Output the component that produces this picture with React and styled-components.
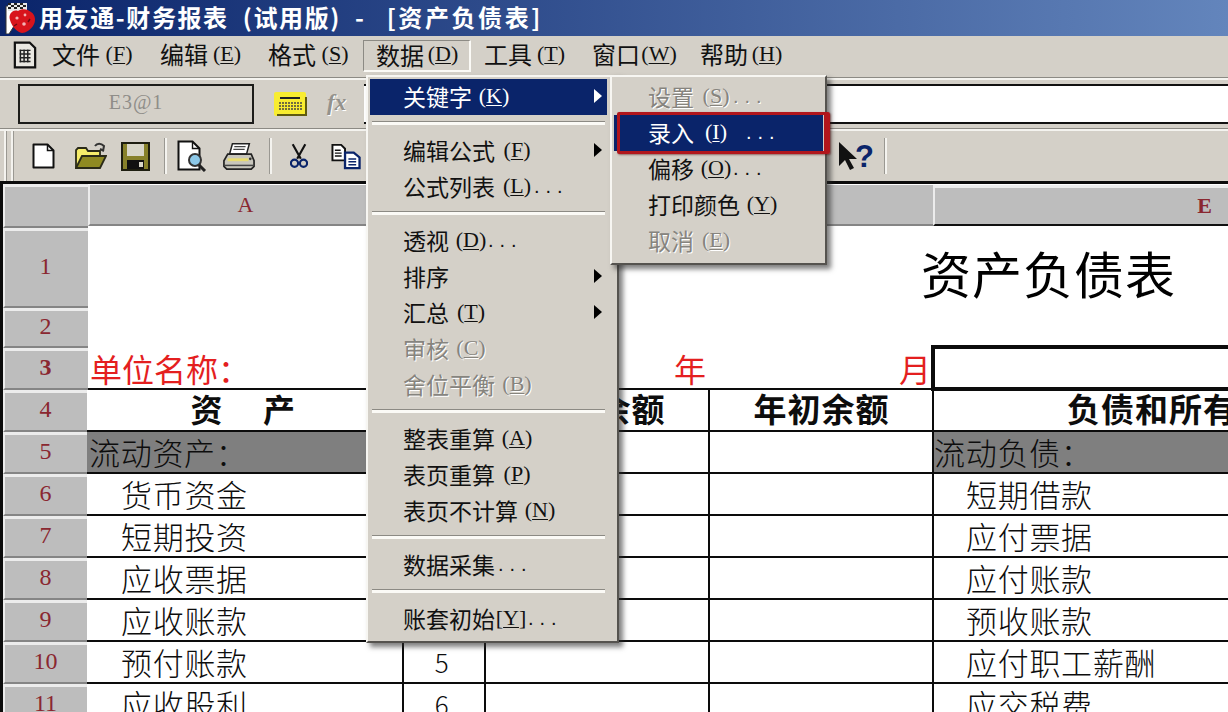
import React from "react";
import styled, { createGlobalStyle, css } from "styled-components";

const CJK = `"Noto Sans CJK SC", "Noto Sans", sans-serif`;
const SERIF = `"Liberation Serif", "Noto Sans CJK SC", serif`;

const GlobalStyle = createGlobalStyle`
  html, body {
    margin: 0;
    padding: 0;
    background: #d4d0c8;
  }
  * { box-sizing: border-box; }
`;

const Page = styled.div`
  width: 1228px;
  height: 712px;
  overflow: hidden;
  position: relative;
  font-family: ${CJK};
  background: #d4d0c8;
  color: #000;
`;

/* title bar */
const TitleBar = styled.div`
  height: 36px;
  display: flex;
  align-items: center;
  padding-left: 3px;
  gap: 3px;
  background: linear-gradient(90deg, #0a246a 0%, #6385bc 100%);
`;
const TitleText = styled.div`
  color: #fff;
  font-size: 24px;
  font-weight: 700;
  line-height: 32px;
  padding-bottom: 3px;
  letter-spacing: 1.6px;
  white-space: pre;
`;
const TitleDoc = styled.span`
  letter-spacing: 2.6px;
`;

/* menu bar */
const MenuBar = styled.div`
  height: 41px;
  display: flex;
  align-items: center;
  padding: 0 0 1px 13px;
`;
const MenuIcon = styled.div`
  width: 26px;
  height: 30px;
  display: flex;
`;
const MenuEntry = styled.div`
  width: 108px;
  height: 32px;
  padding: 0 0 5px 13px;
  display: flex;
  align-items: center;
  font-size: 24px;
  white-space: nowrap;
  color: #111;
  ${(p) =>
    p.$open &&
    css`
      border-top: 1px solid #8c8a84;
      border-left: 1px solid #8c8a84;
      border-bottom: 2px solid #fbfaf6;
      border-right: 2px solid #fbfaf6;
      padding: 0 0 3px 12px;
    `}
`;
const Hotkey = styled.span`
  font-family: ${SERIF};
  display: inline-flex;
  justify-content: center;
  width: 28px;
  margin-left: ${(p) => p.$gap ?? 5}px;
  font-size: 22px;
  u { text-underline-offset: 2px; text-decoration-thickness: 1px; }
`;

/* formula bar */
const BarRule = styled.div`
  height: 3px;
  background: #f4f3ef;
  border-top: 1px solid #8c8a84;
`;
const FormulaBar = styled.div`
  height: 48px;
  display: flex;
  align-items: center;
  padding-left: 18px;
`;
const NameBox = styled.div`
  width: 236px;
  height: 40px;
  padding-bottom: 3px;
  border: 2px solid #1c1c1a;
  display: flex;
  align-items: center;
  justify-content: center;
  font-family: ${SERIF};
  font-size: 20px;
  letter-spacing: 1px;
  color: #8f8d88;
`;
const KeyIcon = styled.div`
  width: 34px;
  height: 26px;
  margin-left: 19px;
  display: flex;
`;
const FxMark = styled.div`
  width: 24px;
  margin-left: 20px;
  padding-bottom: 2px;
  font-family: ${SERIF};
  font-style: italic;
  font-weight: 700;
  font-size: 23px;
  color: #94928c;
  text-shadow: 1px 1px 0 #fff;
`;
const FormulaInput = styled.div`
  flex: 1;
  height: 40px;
  margin-left: 13px;
  background: #fff;
  border-top: 2px solid #111;
  border-bottom: 2px solid #111;
`;

/* toolbar */
const ToolBar = styled.div`
  height: 50px;
  display: flex;
  align-items: center;
  position: relative;
  padding-left: 4px;
`;
const Grip = styled.div`
  width: 3px;
  height: 50px;
  margin-right: 4px;
  background: #f4f3ef;
  border-right: 1px solid #9a9892;
`;
const ToolIcon = styled.div`
  width: ${(p) => p.$w}px;
  height: 36px;
  margin-left: ${(p) => p.$ml}px;
  display: flex;
  align-items: center;
  flex: none;
`;
const ToolSep = styled.div`
  width: 3px;
  height: 36px;
  margin-left: ${(p) => p.$ml}px;
  background: #f4f3ef;
  border-left: 1px solid #9a9892;
  flex: none;
`;
const HelpMark = styled.span`
  font-family: "Liberation Sans", sans-serif;
  font-weight: 700;
  font-size: 31px;
  line-height: 31px;
  color: #0a246a;
  margin-left: -3px;
`;

/* sheet */
const Sheet = styled.div`
  display: grid;
  grid-template-columns: 85px 315px 82px 224px 224px 295px;
  grid-template-rows: 44px 80px 40px 42px repeat(8, 42px);
  border-top: 3px solid #0c0c0c;
  border-left: 3px solid #0c0c0c;
  background: #fff;
`;
const HeaderCell = styled.div`
  background: #bdbdbd;
  display: flex;
  align-items: center;
  justify-content: ${(p) => p.$align ?? "center"};
  padding-right: ${(p) => p.$pr ?? 2}px;
  padding-bottom: 5px;
  color: #8a2730;
  font-family: ${SERIF};
  font-size: ${(p) => p.$size ?? 24}px;
  font-weight: ${(p) => (p.$bold ? 700 : 400)};
  border-top: 3px solid #ececec;
  border-left: 2px solid #ececec;
  border-bottom: 2px solid #858585;
`;
const ColHead = styled(HeaderCell)`
  border-left: ${(p) => (p.$edge ? "2px solid #ececec" : "0")};
  border-top: ${(p) => (p.$raised ? "3px solid #ececec" : "0")};
  border-bottom: 2px solid ${(p) => (p.$raised ? "#111" : "#858585")};
  margin-top: 1px;
  margin-bottom: 2px;
  padding-bottom: 0;
  font-size: 22px;
`;
const Blank = styled.div`
  grid-column: ${(p) => p.$span};
`;
const TitleCell = styled.div`
  grid-column: 4 / 7;
  display: flex;
  justify-content: flex-end;
  align-items: center;
  padding: 8px 52px 0 0;
  font-size: 50px;
  letter-spacing: 1px;
  line-height: 60px;
  font-weight: 400;
  white-space: nowrap;
`;
const InfoCell = styled.div`
  display: flex;
  align-items: flex-start;
  justify-content: ${(p) => p.$align ?? "flex-start"};
  color: #e41f1f;
  font-size: 32px;
  line-height: 40px;
  padding-left: ${(p) => p.$pl ?? 2}px;
  padding-right: ${(p) => p.$pr ?? 0}px;
  white-space: nowrap;
  grid-column: ${(p) => p.$span ?? "auto"};
  border-bottom: 2px solid #0c0c0c;
`;
const SelectedCell = styled.div`
  margin: -3px 0 -1px -2px;
  border: 4px solid #0c0c0c;
  border-right: 0;
  background: #fff;
  position: relative;
  z-index: 1;
`;
const Cell = styled.div`
  display: flex;
  align-items: center;
  justify-content: ${(p) => (p.$center ? "center" : "flex-start")};
  padding-left: ${(p) => p.$pl ?? 0}px;
  padding-right: ${(p) => p.$pr ?? 0}px;
  padding-bottom: ${(p) => p.$pb ?? 0}px;
  font-size: ${(p) => p.$size ?? 31}px;
  line-height: 36px;
  font-weight: ${(p) => (p.$bold ? 700 : 300)};
  letter-spacing: ${(p) => p.$track ?? 0.7}px;
  white-space: pre;
  background: ${(p) => (p.$shade ? "#7f7f7f" : "#fff")};
  color: #0d0d0d;
  border-bottom: 2px solid #0c0c0c;
  border-left: ${(p) => (p.$noLeft ? "0" : "2px solid #0c0c0c")};
  margin-left: -1px;
`;

/* dropdown menus */
const Dropdown = styled.div`
  position: absolute;
  top: 75px;
  left: ${(p) => p.$left}px;
  width: ${(p) => p.$width}px;
  padding: 2px 2px ${(p) => p.$pb ?? 2}px;
  z-index: ${(p) => p.$z};
  background: #d4d0c8;
  border-top: 2px solid #f7f6f2;
  border-left: 2px solid #f7f6f2;
  border-right: 2px solid #55534f;
  border-bottom: 2px solid #55534f;
  box-shadow: 4px 4px 5px rgba(40, 40, 40, 0.6);
`;
const Item = styled.div`
  position: relative;
  height: 36px;
  display: flex;
  align-items: center;
  padding-left: ${(p) => p.$pad}px;
  padding-bottom: 2px;
  font-size: 23px;
  white-space: pre;
  color: ${(p) => (p.$disabled ? "#86847e" : p.$active ? "#fff" : "#111")};
  background: ${(p) => (p.$active ? "#0a246a" : "transparent")};
  text-shadow: ${(p) => (p.$disabled ? "1px 1px 0 #fff" : "none")};
  margin-right: ${(p) => p.$mr ?? 0}px;
`;
const Dots = styled.span`
  font-family: "Liberation Sans", sans-serif;
  font-size: 20px;
  letter-spacing: 6px;
  margin-left: ${(p) => p.$ml ?? 3}px;
`;
const Arrow = styled.span`
  position: absolute;
  right: 5px;
  top: 10px;
  width: 0;
  height: 0;
  border-top: 7px solid transparent;
  border-bottom: 7px solid transparent;
  border-left: 8px solid ${(p) => (p.$light ? "#fff" : "#000")};
`;
const Separator = styled.div`
  height: 18px;
  display: flex;
  align-items: center;
  padding-bottom: 2px;
  margin-right: ${(p) => p.$mr ?? 0}px;
  &::before {
    content: "";
    flex: 1;
    height: 3px;
    margin: 0 2px;
    background: #fbfaf6;
    border-top: 1px solid #8c8a84;
  }
`;
const RedBox = styled.div`
  position: absolute;
  top: -3px;
  left: 3px;
  right: -7px;
  bottom: -3px;
  border: 3px solid #b1161c;
  border-right-width: 6px;
  border-radius: 2px;
  box-shadow: 1px 1px 2px rgba(80, 0, 0, 0.5);
`;

const AppLogo = () => (
  <svg width="33" height="32" viewBox="0 0 33 32">
    <path d="M3 4h17v6l-14 22H3z" fill="#fff" stroke="#333" strokeWidth="1" />
    <path d="M5 1h19v8H5z" fill="#e8e8e8" />
    <path d="M5 1h3v2H5zM11 1h3v2h-3zM17 1h3v2h-3zM8 3h3v2H8zM14 3h3v2h-3zM20 3h3v2h-3zM5 5h3v2H5zM11 5h3v2h-3zM17 5h3v2h-3z" fill="#222" />
    <path d="M7 18c-2-6 3-11 8-9 4-3 10-2 13 1 5 3 5 10 2 14-3 4-7 7-11 7-5-1-10-6-12-13z" fill="#d8141c" />
    <circle cx="14" cy="16" r="1.6" fill="#f3b4b4" />
    <circle cx="22" cy="13" r="1.4" fill="#f3b4b4" />
    <circle cx="21" cy="22" r="1.8" fill="#f3b4b4" />
    <path d="M11 24l3-2M25 20l2-3" stroke="#6e0c10" strokeWidth="1.5" />
  </svg>
);

const SheetDocIcon = () => (
  <svg width="24" height="28" viewBox="0 0 26 30">
    <path d="M2 1.5h16l6 6v21H2z" fill="#e9e7e1" stroke="#111" strokeWidth="2.4" />
    <path d="M7 10h12M7 14h12M7 18h12M7 22h12M8 9v14M12 9v14M16 9v14" stroke="#222" strokeWidth="1.6" />
  </svg>
);

const KeyboardIcon = () => (
  <svg width="34" height="26" viewBox="0 0 34 26">
    <rect x="1" y="1" width="32" height="24" rx="2" fill="#f8ec30" />
    <path d="M4 24h29V6" fill="none" stroke="#5f5a10" strokeWidth="2" />
    <path d="M7 7h20" stroke="#222" strokeWidth="2" />
    <path d="M6 12h23M6 15h23M6 18h23" stroke="#444" strokeWidth="1.6" strokeDasharray="2 1" />
  </svg>
);

const NewIcon = () => (
  <svg width="23" height="26" viewBox="0 0 23 26">
    <path d="M1.5 1.5h14l6 6v17h-20z" fill="#fff" stroke="#111" strokeWidth="2" strokeLinejoin="round" />
    <path d="M15.5 1.5v6h6" fill="none" stroke="#111" strokeWidth="1.5" />
  </svg>
);

const OpenIcon = () => (
  <svg width="32" height="30" viewBox="0 0 32 30">
    <path d="M1 27V9l2-2h8l2 3h12v5" fill="#f5ec6a" stroke="#2a2a18" strokeWidth="1.8" />
    <path d="M1 27l6-12h24l-6 12z" fill="#8f8a22" stroke="#2a2a18" strokeWidth="1.8" />
    <path d="M20 5c2-3 6-3 9 0l-1 5M29 10l-4-2" fill="none" stroke="#333" strokeWidth="2" />
  </svg>
);

const SaveIcon = () => (
  <svg width="29" height="29" viewBox="0 0 29 29">
    <rect x="1" y="1" width="27" height="27" fill="#87812a" stroke="#1e1e10" strokeWidth="2" />
    <rect x="6" y="2" width="17" height="12" fill="#d8d6c8" />
    <rect x="6" y="18" width="17" height="9" fill="#111" />
    <rect x="18" y="20" width="4" height="5" fill="#d8d6c8" />
  </svg>
);

const PreviewIcon = () => (
  <svg width="32" height="32" viewBox="0 0 32 32">
    <path d="M1.5 1.5h14l7 7v21h-21z" fill="#fff" stroke="#111" strokeWidth="2" />
    <path d="M15.5 1.5v7h7" fill="none" stroke="#111" strokeWidth="1.4" />
    <circle cx="18" cy="20" r="6" fill="#8cc8e8" stroke="#333" strokeWidth="2" />
    <path d="M22 25l6 6" stroke="#222" strokeWidth="3" />
  </svg>
);

const PrintIcon = () => (
  <svg width="32" height="30" viewBox="0 0 34 30">
    <path d="M10 2h18l-3 11H7z" fill="#fff" stroke="#222" strokeWidth="1.6" />
    <path d="M12 5h12M11 8h12" stroke="#444" strokeWidth="1.4" />
    <path d="M5 13h25l3 7v6l-3 3H4l-3-3v-6z" fill="#c8c6bc" stroke="#222" strokeWidth="1.8" />
    <path d="M5 19h22" stroke="#e8dc70" strokeWidth="3" />
    <path d="M2 25h30" stroke="#444" strokeWidth="1.6" />
    <circle cx="29" cy="18" r="1.4" fill="#333" />
  </svg>
);

const CutIcon = () => (
  <svg width="18" height="28" viewBox="0 0 20 28">
    <path d="M3 1l9 16M17 1L8 17" stroke="#111" strokeWidth="2.4" />
    <circle cx="5" cy="22" r="4" fill="none" stroke="#0a246a" strokeWidth="2.4" />
    <circle cx="15" cy="22" r="4" fill="none" stroke="#0a246a" strokeWidth="2.4" />
  </svg>
);

const CopyIcon = () => (
  <svg width="30" height="27" viewBox="0 0 31 27">
    <path d="M1.5 1.5h9l4 4v12h-13z" fill="#fff" stroke="#111" strokeWidth="2" />
    <path d="M4 7h6M4 10h7M4 13h7" stroke="#111" strokeWidth="1.4" />
    <path d="M14.5 9.5h9l6 5v11h-15z" fill="#fff" stroke="#0a246a" strokeWidth="2.4" />
    <path d="M18 16h8M18 19h8M18 22h8" stroke="#0a246a" strokeWidth="1.5" />
  </svg>
);

const PointerIcon = () => (
  <svg width="20" height="30" viewBox="0 0 20 30">
    <path d="M1 1v24l6-6 5 10 4-2-5-9h8z" fill="#111" />
  </svg>
);

// rows 6-9 of the number column sit behind the open menu
const rowsLeft = ["货币资金", "短期投资", "应收票据", "应收账款", "预付账款", "应收股利"];
const rowsRight = ["短期借款", "应付票据", "应付账款", "预收账款", "应付职工薪酬", "应交税费"];

const mainItems = [
  { text: "关键字", key: "K", active: true, arrow: true },
  { sep: true },
  { text: "编辑公式", key: "F", arrow: true },
  { text: "公式列表", key: "L", dots: true },
  { sep: true },
  { text: "透视", key: "D", dots: true },
  { text: "排序", arrow: true },
  { text: "汇总", key: "T", arrow: true },
  { text: "审核", key: "C", disabled: true },
  { text: "舍位平衡", key: "B", disabled: true },
  { sep: true },
  { text: "整表重算", key: "A" },
  { text: "表页重算", key: "P" },
  { text: "表页不计算", key: "N" },
  { sep: true },
  { text: "数据采集", dots: true },
  { sep: true },
  { text: "账套初始", bracket: "Y", dots: true },
];

const subItems = [
  { text: "设置", key: "S", dots: true, disabled: true },
  { text: "录入", key: "I", dots: true, active: true, boxed: true },
  { text: "偏移", key: "O", dots: true },
  { text: "打印颜色", key: "Y" },
  { text: "取消", key: "E", disabled: true },
];

const MenuRows = ({ items, pad, mr }) =>
  items.map((it, i) =>
    it.sep ? (
      <Separator key={i} $mr={mr} />
    ) : (
      <Item key={i} $pad={pad} $active={it.active} $disabled={it.disabled} $mr={mr}>
        {it.text}
        {it.key && (
          <Hotkey $gap={8}>
            (<u>{it.key}</u>)
          </Hotkey>
        )}
        {it.bracket && (
          <Hotkey $gap={2}>
            [<u>{it.bracket}</u>]
          </Hotkey>
        )}
        {it.dots && <Dots $ml={it.boxed ? 16 : 3}>...</Dots>}
        {it.arrow && <Arrow $light={it.active} />}
        {it.boxed && <RedBox />}
      </Item>
    )
  );

const menus = [
  ["文件", "F"],
  ["编辑", "E"],
  ["格式", "S"],
  ["数据", "D"],
  ["工具", "T"],
  ["窗口", "W"],
  ["帮助", "H"],
];

export default function App() {
  return (
    <Page>
      <GlobalStyle />
      <TitleBar>
        <AppLogo />
        <TitleText>
          用友通-财务报表  (试用版)  -   <TitleDoc>[资产负债表]</TitleDoc>
        </TitleText>
      </TitleBar>

      <MenuBar>
        <MenuIcon>
          <SheetDocIcon />
        </MenuIcon>
        {menus.map(([name, k]) => (
          <MenuEntry key={name} $open={k === "D"}>
            {name}
            <Hotkey>
              (<u>{k}</u>)
            </Hotkey>
          </MenuEntry>
        ))}
      </MenuBar>

      <BarRule />
      <FormulaBar>
        <NameBox>E3@1</NameBox>
        <KeyIcon>
          <KeyboardIcon />
        </KeyIcon>
        <FxMark>fx</FxMark>
        <FormulaInput />
      </FormulaBar>

      <BarRule />
      <ToolBar>
        <Grip />
        <Grip />
        <ToolIcon $w={23} $ml={14}>
          <NewIcon />
        </ToolIcon>
        <ToolIcon $w={32} $ml={20}>
          <OpenIcon />
        </ToolIcon>
        <ToolIcon $w={29} $ml={14}>
          <SaveIcon />
        </ToolIcon>
        <ToolSep $ml={14} />
        <ToolIcon $w={32} $ml={10}>
          <PreviewIcon />
        </ToolIcon>
        <ToolIcon $w={34} $ml={14}>
          <PrintIcon />
        </ToolIcon>
        <ToolSep $ml={12} />
        <ToolIcon $w={20} $ml={18}>
          <CutIcon />
        </ToolIcon>
        <ToolIcon $w={31} $ml={21}>
          <CopyIcon />
        </ToolIcon>
        <ToolIcon $w={36} $ml={476}>
          <PointerIcon />
          <HelpMark>?</HelpMark>
        </ToolIcon>
        <ToolSep $ml={10} />
      </ToolBar>

      <Sheet>
        <HeaderCell />
        <ColHead $edge>A</ColHead>
        <ColHead />
        <ColHead />
        <ColHead />
        <ColHead $raised $edge $align="flex-end" $pr={16} $bold>
          E
        </ColHead>

        <HeaderCell>1</HeaderCell>
        <Blank $span="2 / 4" />
        <TitleCell>资产负债表</TitleCell>
        <HeaderCell>2</HeaderCell>
        <Blank $span="2 / 7" />

        <HeaderCell $bold>3</HeaderCell>
        <InfoCell>单位名称：</InfoCell>
        <InfoCell $span="3 / 5" $align="flex-end" $pr={3}>
          年
        </InfoCell>
        <InfoCell $align="flex-end" $pr={2}>
          月
        </InfoCell>
        <SelectedCell />

        <HeaderCell>4</HeaderCell>
        <Cell $noLeft $center $bold $size={32} $pb={4} $pr={4}>资     产</Cell>
        <Cell />
        <Cell $center $bold $size={33} $track={1} $pb={4}>年末余额</Cell>
        <Cell $center $bold $size={33} $track={1} $pb={4}>年初余额</Cell>
        <Cell $pl={133} $bold $size={33} $track={1} $pb={4}>负债和所有者权益</Cell>

        <HeaderCell>5</HeaderCell>
        <Cell $shade $noLeft $pl={2}>流动资产：</Cell>
        <Cell />
        <Cell />
        <Cell />
        <Cell $shade>流动负债：</Cell>

        {rowsLeft.map((name, i) => (
          <React.Fragment key={name}>
            <HeaderCell>{i + 6}</HeaderCell>
            <Cell $noLeft $pl={34}>{name}</Cell>
            <Cell $center $size={26} $pr={5}>{i >= 4 ? i + 1 : ""}</Cell>
            <Cell />
            <Cell />
            <Cell $pl={32}>{rowsRight[i]}</Cell>
          </React.Fragment>
        ))}
      </Sheet>

      <Dropdown $left={366} $width={253} $z={2} $pb={4}>
        <MenuRows items={mainItems} pad={33} mr={8} />
      </Dropdown>
      <Dropdown $left={610} $width={217} $z={3} $pb={4}>
        <MenuRows items={subItems} pad={34} />
      </Dropdown>
    </Page>
  );
}
